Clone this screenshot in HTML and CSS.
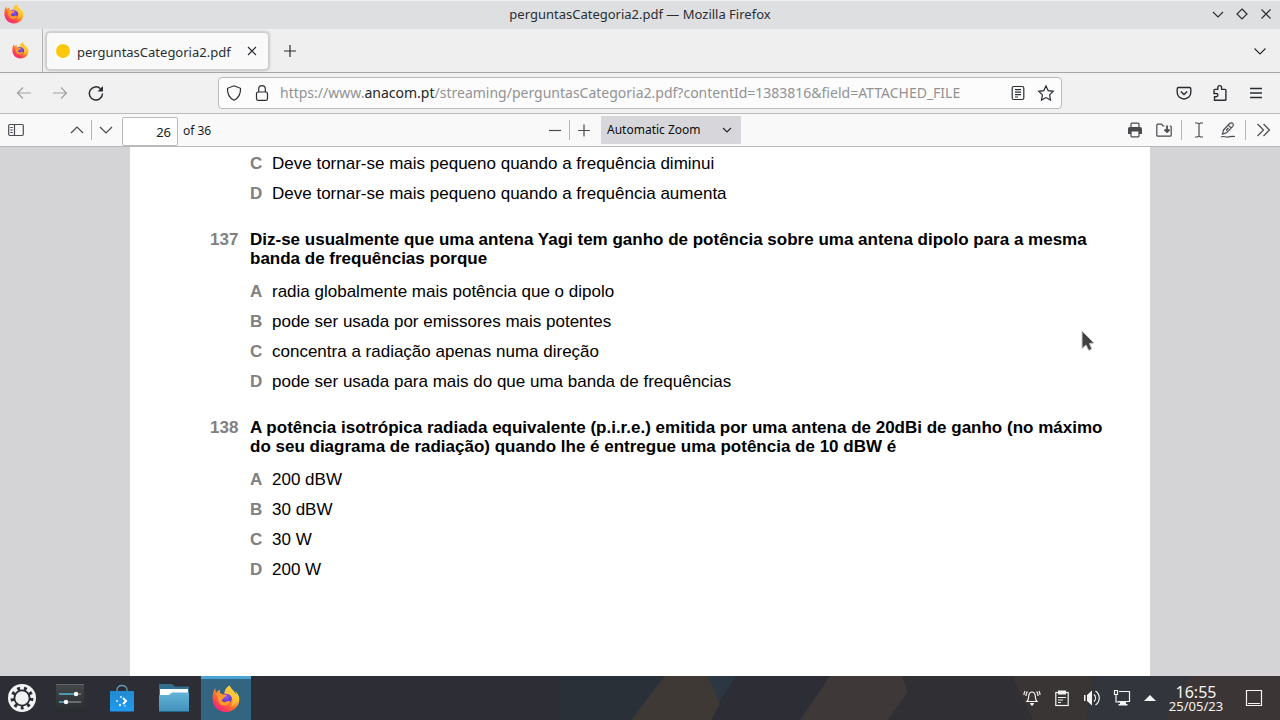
FILE: index.html
```html
<!DOCTYPE html>
<html lang="pt">
<head>
<meta charset="utf-8">
<title>perguntasCategoria2.pdf — Mozilla Firefox</title>
<link rel="stylesheet" href="styles.css">
</head>
<body>
<svg class="defs" aria-hidden="true">
  <defs>
    <linearGradient id="fx-body" x1=".85" y1=".1" x2=".2" y2=".95">
      <stop offset="0" stop-color="#fff04a"/><stop offset=".3" stop-color="#ffbd2e"/>
      <stop offset=".55" stop-color="#ff7a2c"/><stop offset=".8" stop-color="#ff3f55"/><stop offset="1" stop-color="#f0228a"/>
    </linearGradient>
    <radialGradient id="fx-globe" cx=".5" cy=".35" r=".65">
      <stop offset="0" stop-color="#9059ff"/><stop offset="1" stop-color="#5b2fae"/>
    </radialGradient>
    <symbol id="firefox" viewBox="0 0 32 32">
      <path fill="url(#fx-body)" d="M29.8 11.2c-.7-1.700-2.200-3.500-3.300-4.100.9 1.800 1.400 3.500 1.600 4.800C26.200 7.300 23 5.400 20.400 1.300c-.1-.2-.3-.5-.4-.7-4.200 2.500-5.600 7-5.700 9.300-1.600.1-3.200.7-4.500 1.700C8.700 9.200 8.800 6.700 9.200 5c-2 .9-3.500 2.300-4.600 3.500C3.800 7.500 3.900 4.300 4 3.600 2.300 5 1 8.200.8 12.500-.6 22 5.500 31 16 31c8.600 0 15.200-6.600 15.200-14.600 0-1.900-.6-3.800-1.400-5.200z"/>
      <circle cx="16" cy="15.500" r="6.600" fill="url(#fx-globe)"/>
      <path fill="#ff9a2b" d="M4.500 10.500c2-1.500 6-1.500 8 .7 1.400-.5 3.200-.2 4.200.3-.2 1.500-2 2.400-3.700 3 .2 1.300-1.300 1.900-2.300 3 1.900 2.500 4.800 2.600 7 1.200 1.500-.9 3.200-.3 3.100.7-1.200 3-4.900 5-9 3.800C7.800 22 6 17 7 13z"/>
      <path fill="#ffc53a" d="M20 .6c.9 5.100 7.200 7.300 7.400 14.500.1 4.500-2.500 7.900-5.500 9.400 3-4.300 2.500-9.200-.4-12.200-1.500-1.600-3.500-2.600-7.200-2.400C14.500 6 16.500 2.600 20 .6z"/>
    </symbol>
  </defs>
</svg>

<header class="titlebar">
  <svg class="titlebar-logo" width="20" height="20"><use href="#firefox"/></svg>
  <span class="titlebar-text">perguntasCategoria2.pdf — Mozilla Firefox</span>
  <div class="window-buttons">
    <button class="window-button" aria-label="Minimize"><svg class="icon" viewBox="0 0 16 16"><path d="M3 6l5 5 5-5"/></svg></button>
    <button class="window-button" aria-label="Maximize"><svg class="icon" viewBox="0 0 16 16"><path d="M8 3l5 5-5 5-5-5z"/></svg></button>
    <button class="window-button" aria-label="Close"><svg class="icon" viewBox="0 0 16 16"><path d="M3.500 3.500l9 9M12.500 3.500l-9 9"/></svg></button>
  </div>
</header>

<nav class="tabs" aria-label="Tabs">
  <button class="pinned" aria-label="Firefox View"><svg width="17" height="17"><use href="#firefox"/></svg></button>
  <div class="tab">
    <span class="favicon"><span class="favicon-dot"></span></span>
    <span class="tab-title">perguntasCategoria2.pdf</span>
    <button class="tab-close" aria-label="Close tab"><svg class="icon" viewBox="0 0 16 16"><path d="M4 4l8 8M12 4l-8 8"/></svg></button>
  </div>
  <button class="new-tab" aria-label="New tab"><svg class="icon" viewBox="0 0 16 16"><path d="M8 2v12M2 8h12"/></svg></button>
  <button class="all-tabs" aria-label="List all tabs"><svg class="icon" viewBox="0 0 16 16"><path d="M2.500 5.500L8 11l5.500-5.500"/></svg></button>
</nav>

<div class="navbar">
  <div class="nav-side">
    <button class="nav-button" aria-label="Back" disabled><svg class="icon" viewBox="0 0 16 16"><path d="M15 8H1.500M7 2.500L1.500 8 7 13.500"/></svg></button>
    <button class="nav-button" aria-label="Forward" disabled><svg class="icon" viewBox="0 0 16 16"><path d="M1 8h13.500M9 2.500L14.500 8 9 13.500"/></svg></button>
    <button class="nav-button" aria-label="Reload"><svg class="icon reload" viewBox="0 0 16 16"><path d="M14.500 8.500A6.600 6.600 0 1 1 12.500 3.700"/><path class="solid" d="M15 1v5.500H9.500z"/></svg></button>
  </div>
  <div class="urlbar">
    <button class="url-button" aria-label="Tracking protection"><svg class="icon" viewBox="0 0 16 16"><path d="M8 .8l6.500 2.500c.3 5.200-1.500 9.500-6.500 12-5-2.500-6.800-6.800-6.500-12z"/></svg></button>
    <button class="url-button" aria-label="Site information"><svg class="icon" viewBox="0 0 16 16"><rect x="2.500" y="7" width="11" height="8.300" rx="1.500"/><path d="M4.700 7V4a3.300 3.300 0 0 1 6.600 0v3"/></svg></button>
    <span class="url">https://www.<b>anacom.pt</b>/streaming/perguntasCategoria2.pdf?contentId=1383816&amp;field=ATTACHED_FILE</span>
    <button class="url-button" aria-label="Reader view"><svg class="icon" viewBox="0 0 16 16"><rect x="2.200" y="1.500" width="11.600" height="13" rx="1.500"/><path d="M5 4.700h6M5 7.200h6M5 9.700h6M5 12h3"/></svg></button>
    <button class="url-button" aria-label="Bookmark this page"><svg class="icon" viewBox="0 0 16 16"><path d="M8 .9l2.200 4.700 5.100.7-3.700 3.600.9 5.200L8 12.600l-4.500 2.500.9-5.200L.7 6.300l5.100-.7z"/></svg></button>
  </div>
  <div class="nav-side nav-side-end">
    <button class="nav-button" aria-label="Save to Pocket"><svg class="icon strong" viewBox="0 0 16 16"><path d="M2.500 2.500h11c.8 0 1.300.5 1.300 1.300V7.500a6.800 6.500 0 0 1-13.600 0V3.800c0-.8.500-1.300 1.300-1.300z"/><path d="M4.800 6.500L8 9.500l3.200-3"/></svg></button>
    <button class="nav-button" aria-label="Extensions"><svg class="icon strong" viewBox="0 0 16 16"><path d="M2.500 15.300v-3.600h1.700c2.300 0 2.300-3.200 0-3.200H2V5.200c0-.5.300-.8.800-.8h3V2.600c0-2.700 3.800-2.700 3.800 0v1.800h3.500c.5 0 .8.300.8.800v9.300c0 .5-.3.800-.8.800H2.500z"/></svg></button>
    <button class="nav-button" aria-label="Open application menu"><svg class="icon strong" viewBox="0 0 16 16"><path d="M2 3.500h12M2 8h12M2 12.500h12"/></svg></button>
  </div>
</div>

<div class="pdfbar">
  <div class="pdf-group">
    <button class="pdf-button" aria-label="Toggle sidebar"><svg class="icon" viewBox="0 0 16 16"><rect x=".7" y="2.500" width="14.600" height="11" rx="1.200"/><path d="M6.500 2.500v11M2.300 5.500h2.500M2.300 8h2.500M2.300 10.500h2.500"/></svg></button>
    <button class="pdf-button pager-first" aria-label="Previous page"><svg class="icon" viewBox="0 0 16 16"><path d="M2 11l6-6 6 6"/></svg></button>
    <span class="rule"></span>
    <button class="pdf-button" aria-label="Next page"><svg class="icon" viewBox="0 0 16 16"><path d="M2 5l6 6 6-6"/></svg></button>
    <input class="page-number" id="page" type="text" value="26" aria-label="Page">
    <label class="page-total" for="page">of 36</label>
  </div>
  <div class="pdf-group">
    <button class="pdf-button" aria-label="Zoom out"><svg class="icon" viewBox="0 0 16 16"><path d="M2 8.500h12"/></svg></button>
    <span class="rule"></span>
    <button class="pdf-button" aria-label="Zoom in"><svg class="icon" viewBox="0 0 16 16"><path d="M2 8.500h12M8 2.500v12"/></svg></button>
    <div class="zoom">
      <select class="zoom-select" aria-label="Zoom"><option>Automatic Zoom</option></select>
      <svg class="icon zoom-arrow" viewBox="0 0 16 16"><path d="M4 6l4 4 4-4"/></svg>
    </div>
  </div>
  <div class="pdf-group pdf-group-end">
    <button class="pdf-button" aria-label="Print"><svg class="icon" viewBox="0 0 16 16"><path class="solid" d="M3 5h10c1.300 0 2 .8 2 2v5h-3V9H4v3H1V7c0-1.200.7-2 2-2z"/><path d="M4 5V2.200c0-.6.400-1 1-1h6c.6 0 1 .4 1 1V5M4 9h8v5c0 .5-.3.800-.8.800H4.800c-.5 0-.8-.3-.8-.8z"/></svg></button>
    <button class="pdf-button" aria-label="Save"><svg class="icon" viewBox="0 0 16 16"><path d="M8.500 4H7L5.500 2.200H1.800c-.6 0-1 .4-1 1v10c0 .6.400 1 1 1h12.400c.6 0 1-.4 1-1V5c0-.6-.4-1-1-1h-.7"/><path class="heavy" d="M11 3.500v6M8.500 7.500L11 10l2.500-2.500"/></svg></button>
    <span class="rule"></span>
    <button class="pdf-button" aria-label="Text"><svg class="icon" viewBox="0 0 16 16"><path d="M4 1h2.500L8 2l1.500-1H12M8 2v12M4 15h2.500L8 14l1.500 1H12"/></svg></button>
    <button class="pdf-button" aria-label="Draw"><svg class="icon" viewBox="0 0 16 16"><path d="M3.500 8L9.700 1.500c1-1 2.400-.9 3.100-.1.800.8.800 2 0 2.900L6.500 10.700 2.500 12zM8.300 3.200l2.900 2.900M6 8.500l2.500-2.500M1 15c3-1.500 4 .5 7 0s4-1 7-.5"/></svg></button>
    <span class="rule"></span>
    <button class="pdf-button" aria-label="Tools"><svg class="icon" viewBox="0 0 16 16"><path d="M2.500 2l6 6-6 6M8.500 2l6 6-6 6"/></svg></button>
  </div>
</div>

<main class="viewer">
  <article class="page">
    <section class="question">
      <dl class="answers">
        <dt>C</dt><dd>Deve tornar-se mais pequeno quando a frequência diminui</dd>
        <dt>D</dt><dd>Deve tornar-se mais pequeno quando a frequência aumenta</dd>
      </dl>
    </section>
    <section class="question">
      <span class="number">137</span>
      <h2 class="prompt">Diz-se usualmente que uma antena Yagi tem ganho de potência sobre uma antena dipolo para a mesma<br>banda de frequências porque</h2>
      <dl class="answers">
        <dt>A</dt><dd>radia globalmente mais potência que o dipolo</dd>
        <dt>B</dt><dd>pode ser usada por emissores mais potentes</dd>
        <dt>C</dt><dd>concentra a radiação apenas numa direção</dd>
        <dt>D</dt><dd>pode ser usada para mais do que uma banda de frequências</dd>
      </dl>
    </section>
    <section class="question">
      <span class="number">138</span>
      <h2 class="prompt">A potência isotrópica radiada equivalente (p.i.r.e.) emitida por uma antena de 20dBi de ganho (no máximo<br>do seu diagrama de radiação) quando lhe é entregue uma potência de 10 dBW é</h2>
      <dl class="answers">
        <dt>A</dt><dd>200 dBW</dd>
        <dt>B</dt><dd>30 dBW</dd>
        <dt>C</dt><dd>30 W</dd>
        <dt>D</dt><dd>200 W</dd>
      </dl>
    </section>
  </article>
  <svg class="pointer" width="14" height="22" viewBox="0 0 14 22" aria-hidden="true"><path d="M1 1l12 12-4.500.5 2.300 5.500-3 1.500L5 15l-4 3.500z" fill="#404143" stroke="#c8c8c8" stroke-width="1"/></svg>
</main>

<footer class="taskbar">
  <svg class="wallpaper" viewBox="0 0 1280 44" preserveAspectRatio="none" aria-hidden="true">
    <path fill="#2a3038" d="M560 0h110l-40 44h-70z"/>
    <path fill="#2b3742" d="M708 0h28l-18 28z"/>
    <path fill="#3e3935" d="M665 0h43l12 28-9 16h-80z"/>
    <path fill="#3f3838" d="M830 0h72l6 16-20 28h-88z"/>
    <path fill="#302f33" d="M902 0h116l22 44H888l20-28z"/>
    <path fill="#393534" d="M1012 0h82l-8 44h-53z"/>
    <path fill="#32353b" d="M1094 0h95l-24 44h-79z"/>
    <path fill="#3b3535" d="M1189 0h91v44h-115z"/>
  </svg>
  <div class="launchers">
    <button class="launcher kickoff" aria-label="Application launcher">
      <svg width="28" height="28" viewBox="0 0 28 28"><circle cx="14" cy="14" r="14" fill="#f1f2f2"/><g fill="none" stroke="#2b2d35"><circle cx="14" cy="14" r="7.600" stroke-width="1.800"/><circle cx="14" cy="14" r="9.600" stroke-width="3.600" stroke-dasharray="2.800 3.900"/></g></svg>
    </button>
    <button class="launcher" aria-label="System settings">
      <svg width="28" height="28" viewBox="0 0 28 28"><defs><linearGradient id="settings-bg" x1="0" y1="0" x2="0" y2="1"><stop offset="0" stop-color="#454849"/><stop offset="1" stop-color="#292c2f"/></linearGradient></defs><path fill="url(#settings-bg)" d="M0 0h28v28H0z"/><path d="M0 .5h28" stroke="#626668"/><path d="M3 10h17M3 18h7" stroke="#54b5d6" stroke-width="1.500"/><path d="M20 10h5M10 18h15" stroke="#7b8082" stroke-width="1.500"/><circle cx="20" cy="10" r="2.200" fill="#fff"/><circle cx="10" cy="18" r="2.200" fill="#fff"/></svg>
    </button>
    <button class="launcher" aria-label="Software centre">
      <svg width="28" height="28" viewBox="0 0 28 28"><defs><linearGradient id="bag-bg" x1="0" y1="0" x2="0" y2="1"><stop offset="0" stop-color="#218bd0"/><stop offset="1" stop-color="#1f9af0"/></linearGradient></defs><path d="M9 9V6c0-6 10-6 10 0v3" fill="none" stroke="#6d9db5" stroke-width="1.300"/><path fill="url(#bag-bg)" d="M2 7h24v20.500H2z"/><path d="M15 14l3 3-3 3" fill="none" stroke="#fff" stroke-width="2"/><g fill="#d9efff"><circle cx="9" cy="17" r="1"/><circle cx="13" cy="13" r="1"/><circle cx="12" cy="21" r="1.200"/><circle cx="17" cy="22" r=".8"/></g></svg>
    </button>
    <button class="launcher" aria-label="File manager">
      <svg width="30" height="28" viewBox="0 0 30 28"><defs><linearGradient id="folder-bg" x1="0" y1="0" x2="0" y2="1"><stop offset="0" stop-color="#65b3d8"/><stop offset="1" stop-color="#3f90bb"/></linearGradient></defs><path fill="#326f8f" d="M0 0h13l3 2.500h14V14H0z"/><path fill="#fff" d="M1 5h28v8H1z"/><path fill="url(#folder-bg)" d="M0 11h10l3-2.500h17V28H0z"/><path d="M0 27.500h30" stroke="#286787"/></svg>
    </button>
    <button class="launcher launcher-active" aria-label="Firefox"><svg width="28" height="30"><use href="#firefox"/></svg></button>
  </div>
  <div class="tray">
    <button class="tray-button" aria-label="Notifications"><svg class="icon" viewBox="0 0 16 16"><path d="M3 11.500c2-2 1.500-4 1.800-6C5.200 2.500 7 2 8 2s2.800.5 3.200 3.500c.3 2-.2 4 1.800 6zM3.500 1.500C2 2.500 2 4 2 6M1 1C0 2.500 0 4 0 5M12.500 1.500C14 2.500 14 4 14 6M15 1c1 1.500 1 3 1 4"/><path class="solid" d="M6 13h4l-1 2.500H7z"/></svg></button>
    <button class="tray-button" aria-label="Clipboard"><svg class="icon" viewBox="0 0 16 16"><rect x="1.800" y="2.500" width="12.400" height="13"/><path class="solid" d="M4 .5h8v4H4z"/><path d="M4 7.500h8M4 10h5M4 12.500h3"/></svg></button>
    <button class="tray-button" aria-label="Volume"><svg class="icon" viewBox="0 0 16 16"><path class="solid" d="M0 5h1.500v6H0zM3 5l5-4.500v15L3 11z"/><path d="M10 4.500c2 2 2 5 0 7M11.500 1c5 3.500 5 10.500 0 14"/></svg></button>
    <button class="tray-button" aria-label="Network"><svg class="icon" viewBox="0 0 16 16"><path d="M5 1.500h10.500v10H4M.5.500h3v4h-3zM2 4.500v7.500h4"/><path class="solid" d="M6 11.500h6V14H6zM4.500 14h9v1.500h-9z"/></svg></button>
    <button class="tray-button tray-more" aria-label="Show hidden icons"><svg class="icon" viewBox="0 0 16 16"><path class="solid" d="M2 11l6-6 6 6z"/></svg></button>
    <div class="clock"><time class="clock-time">16:55</time><span class="clock-date">25/05/23</span></div>
    <button class="tray-button show-desktop" aria-label="Show desktop"><svg class="icon" viewBox="0 0 16 16"><path d="M.5.500h15v15H.5zM2 13.500h12"/></svg></button>
  </div>
</footer>
</body>
</html>
```

FILE: styles.css
```css
* { box-sizing: border-box; }

body {
  margin: 0;
  height: 100vh;
  display: flex;
  flex-direction: column;
  overflow: hidden;
  font: 13px/18px "Noto Sans", sans-serif;
  color: #2a2e32;
  background: #d4d4d7;
}

button {
  display: flex;
  align-items: center;
  justify-content: center;
  margin: 0;
  padding: 0;
  border: 0;
  background: none;
  color: inherit;
  font: inherit;
}

svg { display: block; }
.defs { position: absolute; width: 0; height: 0; }

.icon {
  width: 16px;
  height: 16px;
  flex: none;
  overflow: visible;
  fill: none;
  stroke: currentColor;
  stroke-width: 1.2;
}
.icon .solid { fill: currentColor; stroke: none; }
.icon .heavy { stroke-width: 1.8; }
.strong { stroke-width: 1.4; }

/* Window title */
.titlebar {
  flex: none;
  height: 29px;
  display: grid;
  grid-template-columns: 1fr auto 1fr;
  align-items: center;
  padding: 0 2px 2px;
  background: #dedfe1;
  border-top: 1px solid #eff0f1;
}
.titlebar-logo { margin-left: 2px; }
.window-buttons { display: flex; justify-content: flex-end; }
.window-button { width: 24px; height: 24px; }

/* Tabs */
.tabs {
  flex: none;
  height: 44px;
  display: flex;
  align-items: center;
  background: #efeff0;
  border-bottom: 1px solid #a5a5a6;
}
.pinned {
  width: 43px;
  align-self: stretch;
  padding-right: 2px;
  border-right: 1px solid #b4b4b5;
}
.tab {
  display: flex;
  align-items: center;
  width: 223px;
  height: 38px;
  margin: 0 3px;
  padding: 0 8px;
  border: 1px solid #cfcfd0;
  border-radius: 4px;
  background: #f9f9fa;
  box-shadow: 0 0 3px #a0a0a0;
}
.favicon {
  display: grid;
  place-items: center;
  width: 16px;
  height: 16px;
  background: #fff;
}
.favicon-dot { width: 14px; height: 14px; border-radius: 50%; background: #fdc70c; }
.tab-title { flex: 1; padding: 2px 0 0 6px; white-space: nowrap; }
.tab-close { width: 16px; height: 24px; }
.new-tab { width: 36px; height: 32px; }
.all-tabs { width: 40px; height: 32px; margin-left: auto; }

/* Navigation */
.navbar {
  flex: none;
  height: 41px;
  display: grid;
  grid-template-columns: 1fr minmax(0, 844px) 1fr;
  align-items: center;
  background: #f1f1f2;
  border-bottom: 1px solid #bcbcbc;
}
.nav-side { display: flex; padding-left: 6px; }
.nav-side-end { justify-content: flex-end; padding: 0 6px 0 0; }
.nav-button { width: 36px; height: 32px; }
.nav-button:disabled { color: #a0a1a3; }
.reload { stroke-width: 1.5; }
.urlbar {
  display: flex;
  align-items: center;
  height: 32px;
  padding: 0 1px;
  border: 1px solid #bababb;
  border-radius: 4px;
  background: #fcfcfc;
}
.url-button { width: 28px; height: 28px; }
.url {
  flex: 1;
  min-width: 0;
  padding-left: 4px;
  overflow: hidden;
  white-space: nowrap;
  font-size: 14px;
  line-height: 20px;
  color: #919294;
}
.url b { font-weight: 400; color: #232629; }

/* Document toolbar */
.pdfbar {
  flex: none;
  height: 33px;
  display: grid;
  grid-template-columns: 1fr auto 1fr;
  align-items: center;
  background: #f9f9fa;
  border-bottom: 1px solid #b8b8b8;
  font-size: 12px;
  color: #4a4a4f;
}
.pdf-group { display: flex; align-items: center; padding-left: 2px; }
.pdf-group-end { justify-content: flex-end; gap: 1px; padding-right: 3px; }
.pdf-button { width: 28px; height: 28px; }
.pager-first { margin-left: 33px; }
.rule { width: 1px; height: 20px; background: #b5b5b7; }
.pdf-group-end .rule { margin: 0 2px; }
.page-number {
  width: 56px;
  height: 29px;
  margin: 2px 5px 0 2px;
  padding: 2px 6px 0;
  border: 1px solid #bbbbbc;
  border-radius: 2px;
  background: #fff;
  color: #1b1b1f;
  font: 13px/18px "Noto Sans", sans-serif;
  text-align: right;
}
.page-total { padding-top: 1px; color: #1b1b1f; }
.zoom { position: relative; width: 140px; margin-left: 3px; }
.zoom-select {
  appearance: none;
  display: block;
  width: 100%;
  height: 28px;
  padding: 0 24px 0 6px;
  border: 0;
  border-radius: 0;
  background: #d7d7db;
  color: #0c0c0d;
  font: 12px/18px "Noto Sans", sans-serif;
}
.zoom-arrow { position: absolute; right: 6px; top: 6px; pointer-events: none; color: #232629; }

/* Document */
.viewer {
  position: relative;
  flex: 1;
  min-height: 0;
  padding: 0 130px;
  overflow: hidden;
  background: #d4d4d7;
}
.page {
  min-height: 100%;
  padding: 7px 0 0 80px;
  background: #fff;
  color: #000;
  font: 17px/19px "Liberation Sans", sans-serif;
}
.question {
  display: grid;
  grid-template-columns: 40px 1fr;
  row-gap: 14px;
  margin-bottom: 27px;
}
.number { font-weight: 700; color: #808080; }
.prompt { margin: 0; font-size: 17px; line-height: 19px; white-space: nowrap; }
.answers {
  grid-column: 2;
  display: grid;
  grid-template-columns: 22px 1fr;
  row-gap: 11px;
  margin: 0;
}
.answers dt { font-weight: 700; color: #808080; }
.answers dd { margin: 0; }
.pointer { position: absolute; left: 1081px; top: 183px; }

/* Desktop panel */
.taskbar {
  position: relative;
  flex: none;
  height: 44px;
  display: flex;
  justify-content: space-between;
  background: #2d2d36;
  color: #f4f4f4;
}
.wallpaper { position: absolute; inset: 0; width: 100%; height: 100%; }
.launchers, .tray { position: relative; display: flex; }
.launchers { gap: 2px; }
.launcher { width: 50px; height: 44px; }
.kickoff { width: 43px; }
.launcher-active { background: #336580; border-top: 3px solid #4aa3d5; padding-bottom: 2px; }
.tray { align-items: center; padding-right: 1px; }
.tray-button { width: 30px; height: 44px; }
.tray-more { width: 26px; }
.clock {
  display: flex;
  flex-direction: column;
  align-items: center;
  width: 66px;
}
.clock-time { font-size: 16px; line-height: 16px; }
.clock-date { font-size: 13px; line-height: 13px; }
.show-desktop { width: 50px; }
```
